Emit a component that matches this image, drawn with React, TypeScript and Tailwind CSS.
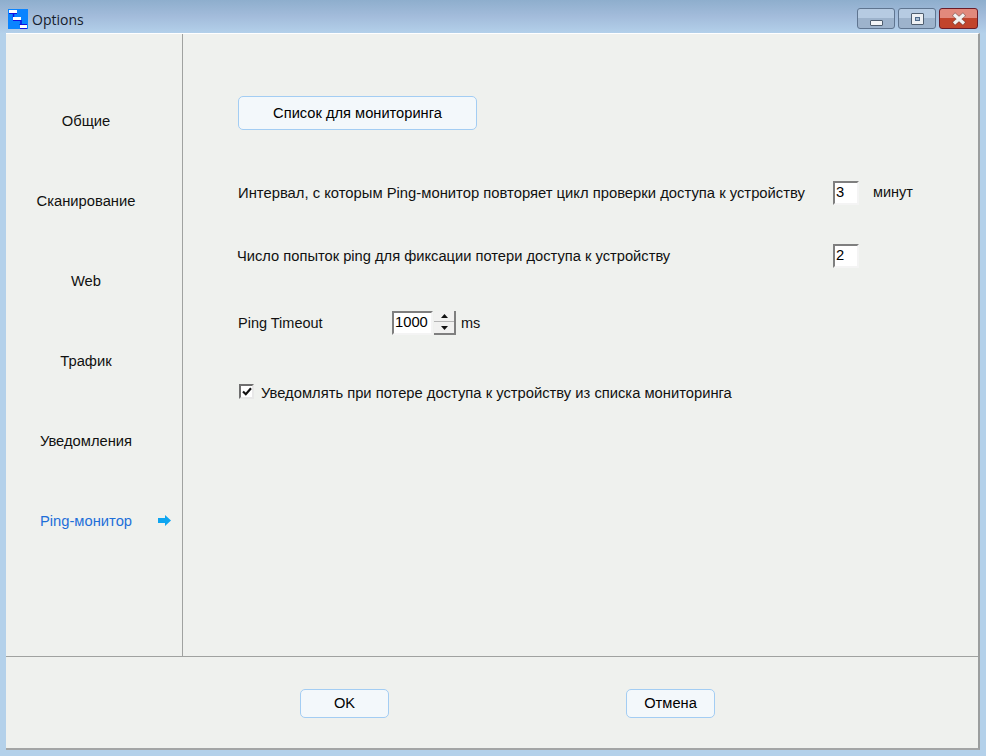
import React from 'react';

const font = "font-['Liberation_Sans',Arial,sans-serif]";

function Field({ value, width }: { value: string; width: string }) {
  return (
    <div className={`${width} h-[24px] flex items-center pl-[1px] pb-[1px] bg-white border-2 border-t-[#7f7f7f] border-l-[#7f7f7f] border-r-[#f4f4f4] border-b-[#f4f4f4] text-[14.75px] leading-none text-black`}>
      {value}
    </div>
  );
}

function TitleButton({ className, children }: { className: string; children: React.ReactNode }) {
  return (
    <div className={`h-[21px] rounded-[3px] border flex items-center justify-center ${className}`}>
      {children}
    </div>
  );
}

function DialogButton({ label, className }: { label: string; className: string }) {
  return (
    <button className={`rounded-[5px] border border-[#a3cdf3] bg-[#f3f8fb] text-[14.67px] text-black ${className}`}>
      {label}
    </button>
  );
}

export default function App() {
  const tabs = ['Общие', 'Сканирование', 'Web', 'Трафик', 'Уведомления', 'Ping-монитор'];

  return (
    <div className={`w-[986px] h-[756px] flex flex-col overflow-hidden bg-[#b4d1ea] ${font}`}>
      <div className="h-[33px] shrink-0 flex items-start bg-gradient-to-b from-[#8eaecd] via-[#a3bcdb] to-[#b3d0ea]">
        <svg width="20" height="20" viewBox="0 0 20 20" className="ml-[8px] mt-[9px] shrink-0">
          <rect width="20" height="20" fill="#0a84ff" />
          <path d="M5.5 4v5M13 11v5" stroke="#1010e0" strokeWidth="1.5" fill="none" />
          <rect x="1" y="1" width="8" height="3" fill="#fff" />
          <path d="M1 4.5H9" stroke="#1010e0" strokeWidth="1" />
          <rect x="5" y="8" width="8" height="3" fill="#fff" />
          <path d="M5 11.5H13" stroke="#1010e0" strokeWidth="1" />
          <rect x="12" y="16" width="7" height="3" fill="#fff" />
          <path d="M12 19.5H19M11.5 15.5H19" stroke="#1010e0" strokeWidth="1" />
        </svg>
        <span className="ml-[4px] mt-[10px] font-['Open_Sans',sans-serif] text-[14px] leading-[20px] text-[#15202c]">Options</span>
        <div className="ml-auto mr-[8px] mt-[8px] flex gap-[3px]">
          <TitleButton className="w-[38px] border-[#5f7590] bg-gradient-to-b from-[#b6cbe2] from-50% to-[#9db3cc] to-50%">
            <div className="w-[13px] h-[6px] mt-[9px] rounded-[1px] bg-[#f3f5f7] border border-[#4e5d6e]" />
          </TitleButton>
          <TitleButton className="w-[38px] border-[#5f7590] bg-gradient-to-b from-[#b6cbe2] from-50% to-[#9db3cc] to-50%">
            <div className="w-[13px] h-[12px] rounded-[1px] bg-[#eef1f4] border border-[#4e5d6e] flex items-center justify-center">
              <div className="w-[5px] h-[4px] border border-[#4e6a8a] bg-[#a9bdd3]" />
            </div>
          </TitleButton>
          <TitleButton className="w-[39px] border-[#6b1c28] bg-gradient-to-b from-[#e2897c] from-50% to-[#c2442c] to-50%">
            <svg width="16" height="14" viewBox="0 0 16 14">
              <path d="M2.5 2 L13.5 12 M13.5 2 L2.5 12" stroke="#4a4a4a" strokeWidth="4.6" opacity="0.45" />
              <path d="M3 2.5 L13 11.5 M13 2.5 L3 11.5" stroke="#f2f2f2" strokeWidth="3.2" />
            </svg>
          </TitleButton>
        </div>
      </div>

      <div className="h-[717px] ml-[6px] w-[974px] flex flex-col bg-[#eff1ee] border-t border-t-white border-r-2 border-r-[#9b9e9e] border-b-2 border-b-[#a3a5a5]">
        <div className="h-[623px] flex border-b border-b-[#a0a2a0]">
          <div className="w-[177px] shrink-0 pt-[47px] border-r border-r-[#a0a2a0]">
            {tabs.map((tab) => {
              const active = tab === 'Ping-монитор';
              return (
                <div key={tab} className={`relative h-[80px] w-[160px] pt-[1px] flex items-center justify-center text-[14.75px] ${active ? 'text-[#1e6fd9]' : 'text-[#111]'}`}>
                  {tab}
                  {active && (
                    <svg width="13" height="11" viewBox="0 0 13 11" className="absolute left-[152px] top-[34px]">
                      <path d="M0 3 H7 V0 L13 5.5 L7 11 V8 H0 Z" fill="#0ea5f0" />
                    </svg>
                  )}
                </div>
              );
            })}
          </div>

          <div className="flex-1 pl-[55px] pt-[62px] text-[14.75px] text-[#111]">
            <DialogButton label="Список для мониторинга" className="w-[239px] h-[34px]" />

            <div className="mt-[51px] flex items-center h-[24px]">
              <span className="w-[595px] text-[14.8px]">Интервал, с которым Ping-монитор повторяет цикл проверки доступа к устройству</span>
              <Field value="3" width="w-[26px]" />
              <span className="ml-[14px] text-[14.5px]">минут</span>
            </div>

            <div className="mt-[39px] flex items-center h-[24px] -ml-[1px]">
              <span className="w-[596px] text-[14.7px]">Число попыток ping для фиксации потери доступа к устройству</span>
              <Field value="2" width="w-[26px]" />
            </div>

            <div className="mt-[43px] flex items-center h-[24px] text-[14.5px]">
              <span className="w-[154px] pt-[2px]">Ping Timeout</span>
              <Field value="1000" width="w-[41px]" />
              <div className="ml-[1px] w-[22px] h-[24px] flex flex-col gap-[1px] border-r-2 border-b-2 border-r-[#7f7f7f] border-b-[#7f7f7f] bg-[#f1f1f0]">
                <div className="flex-1 flex items-center justify-center border-b border-b-[#b5b5b5]">
                  <svg width="7" height="4" viewBox="0 0 7 4"><path d="M3.5 0 L7 4 H0 Z" fill="#111" /></svg>
                </div>
                <div className="flex-1 flex items-center justify-center">
                  <svg width="7" height="4" viewBox="0 0 7 4"><path d="M0 0 H7 L3.5 4 Z" fill="#111" /></svg>
                </div>
              </div>
              <span className="ml-[5px] pt-[2px]">ms</span>
            </div>

            <div className="mt-[46px] flex items-center h-[20px] pl-[1px]">
              <div className="w-[15px] h-[15px] flex items-center justify-center bg-white border-2 border-t-[#6f6f6f] border-l-[#6f6f6f] border-r-[#e8e8e8] border-b-[#e8e8e8]">
                <svg width="10" height="9" viewBox="0 0 10 9">
                  <path d="M1 4.5 L3.8 7.2 L9 1.2" stroke="#111" strokeWidth="2.2" fill="none" />
                </svg>
              </div>
              <span className="ml-[7px] mt-[4px]">Уведомлять при потере доступа к устройству из списка мониторинга</span>
            </div>
          </div>
        </div>

        <div className="flex-1 pl-[294px] pt-[32px] flex items-start">
          <DialogButton label="OK" className="w-[89px] h-[29px] pb-[2px]" />
          <DialogButton label="Отмена" className="w-[89px] h-[29px] pb-[2px] ml-[237px]" />
        </div>
      </div>
    </div>
  );
}
